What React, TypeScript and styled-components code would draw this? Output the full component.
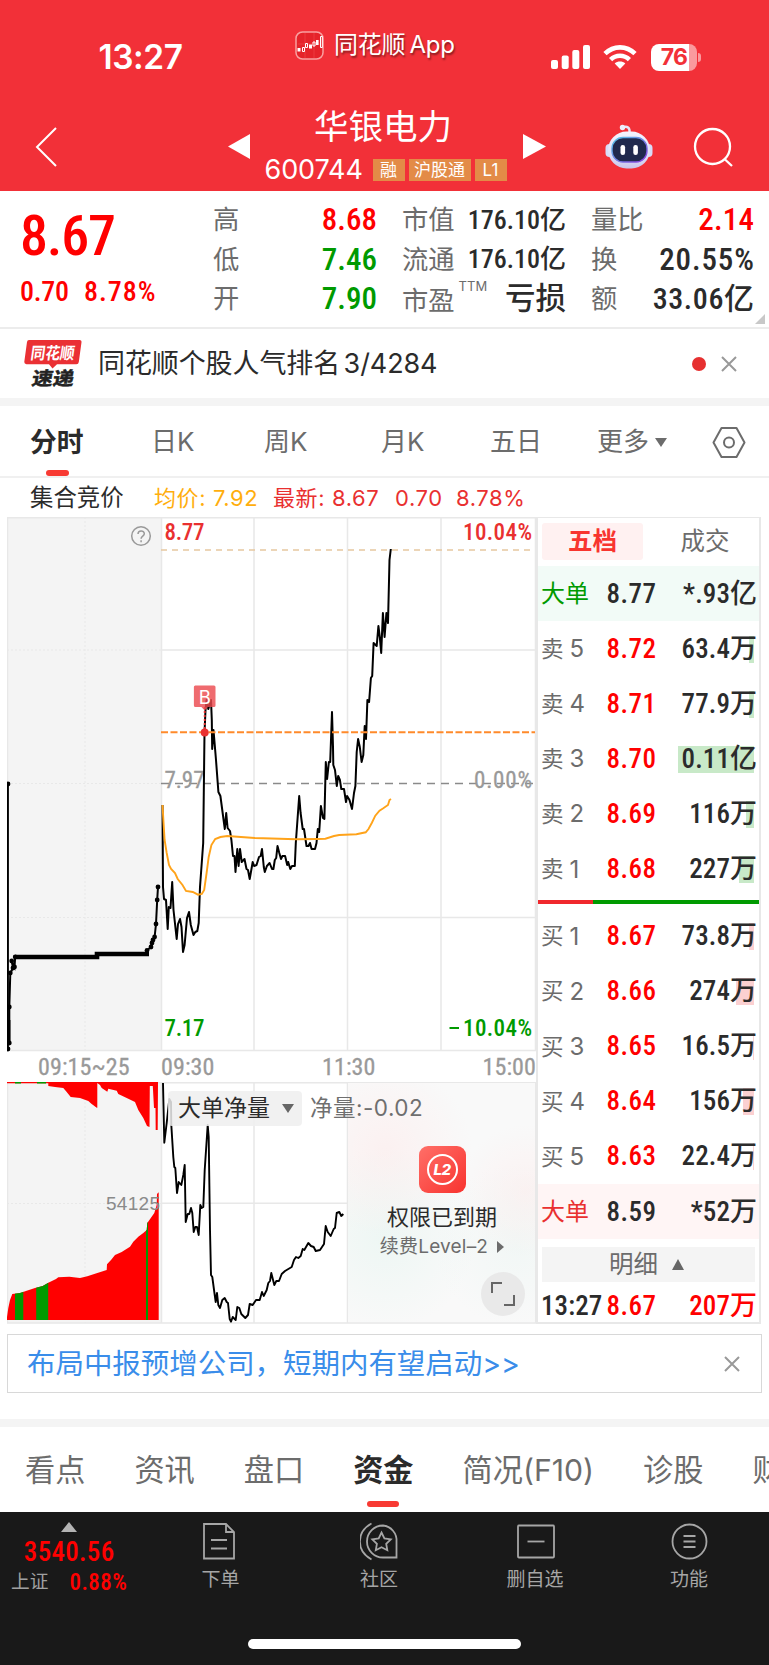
import React from 'react';
import styled, { createGlobalStyle, css } from 'styled-components';

const UI = `Inter, "Noto Sans CJK SC", sans-serif`;
const DIN = `Roboto, "Noto Sans CJK SC", sans-serif`;

const RED = '#ff0000';
const GREEN = '#009a00';
const INK = '#2b2b2b';
const MUTED = '#6c6c6c';
const LINE = '#e8e8e8';

const GlobalStyle = createGlobalStyle`
  * { box-sizing: border-box; }
  body { margin: 0; background: #fff; }
`;

const Screen = styled.div`
  width: 769px;
  height: 1665px;
  display: flex;
  flex-direction: column;
  overflow: hidden;
  background: #fff;
  color: ${INK};
  font-family: ${UI};
  font-size: 24px;
  line-height: 1;
  white-space: nowrap;
`;

/* condensed figures used for every price and amount */
const Num = styled.span<{ $size: number; $color?: string; $ls?: number; $light?: boolean }>`
  font-family: ${DIN};
  font-stretch: 75%;
  font-weight: ${p => (p.$light ? 400 : 500)};
  font-size: ${p => p.$size}px;
  line-height: 1;
  letter-spacing: ${p => p.$ls ?? 0}px;
  margin-right: ${p => -(p.$ls ?? 0)}px;
  color: ${p => p.$color ?? INK};
`;

/* ---------- header ---------- */

const Header = styled.header`
  height: 191px;
  flex: none;
  background: #f23038;
  color: #fff;
`;

const StatusBar = styled.div`
  height: 100px;
  display: grid;
  grid-template-columns: 295px 256px 1fr;
`;

const Clock = styled.div`
  padding: 41px 0 0 98.5px;
  font-size: 33.4px;
  font-weight: 600;
  letter-spacing: -0.4px;
`;

const AppMark = styled.div`
  height: 60px;
  padding-top: 30px;
  display: flex;
  align-items: center;
  gap: 10px;
  font-size: 24px;
  letter-spacing: -0.3px;
  word-spacing: -2px;
  text-shadow: 1px 2px 2px rgba(0, 0, 0, 0.45);
`;

const Indicators = styled.div`
  padding-top: 44px;
  display: flex;
  align-items: flex-start;
  gap: 13px;
`;

const BatteryGroup = styled.div`
  display: flex;
  margin-left: 1px;
`;

const Battery = styled.div`
  width: 46px;
  height: 27px;
  display: flex;
  align-items: center;
  justify-content: center;
  border-radius: 8px;
  background: linear-gradient(90deg, #fff 38px, #fa9a9e 38px);
  color: #f23038;
  font-size: 23px;
  font-weight: 700;
  letter-spacing: -0.8px;
`;

const BatteryTip = styled.i`
  width: 3px;
  height: 9px;
  margin: 9px 0 0 1px;
  border-radius: 0 3px 3px 0;
  background: #fa9a9e;
`;

const NavBar = styled.div`
  height: 91px;
  display: grid;
  grid-template-columns: 228px 22px 273px 23px 59px 88px 1fr;
`;

const NavSlot = styled.div<{ $top: number; $left?: number }>`
  padding: ${p => p.$top}px 0 0 ${p => p.$left ?? 0}px;
  line-height: 0;
`;

const StockTitle = styled.div`
  display: flex;
  flex-direction: column;
  align-items: flex-start;
`;

const StockName = styled.div`
  padding: 10px 0 0 64px;
  font-size: 34.5px;
  line-height: 34px;
`;

const StockMeta = styled.div`
  margin-top: 12px;
  padding-left: 14.5px;
  display: flex;
  align-items: center;
  gap: 4px;
`;

const Code = styled.span`
  width: 104px;
  font-size: 27px;
  letter-spacing: -0.1px;
  line-height: 28px;
`;

const Tag = styled.span`
  min-width: 32px;
  height: 22px;
  padding: 0 5.5px;
  display: flex;
  align-items: center;
  justify-content: center;
  background: #e38b47;
  font-size: 17px;
`;

/* ---------- quote summary ---------- */

const Quote = styled.section`
  height: 138px;
  flex: none;
  display: grid;
  grid-template-columns: 167px 164px 164px 163px;
  column-gap: 25px;
  padding-left: 21px;
  border-bottom: 2px solid #ececec;
  position: relative;
`;

const Last = styled.div`
  padding-top: 17px;
  margin-left: -1px;
`;

const Change = styled.div`
  display: flex;
  gap: 15px;
  margin-top: 14px;
`;

const Stats = styled.div`
  padding-top: 9px;
  display: flex;
  flex-direction: column;
`;

const Stat = styled.div`
  height: 39.5px;
  display: flex;
  align-items: center;
  justify-content: space-between;
`;

const StatLabel = styled.span<{ $drop?: boolean }>`
  display: flex;
  align-items: flex-start;
  gap: 4px;
  color: ${MUTED};
  font-size: 26.3px;
  line-height: 26px;
  padding-top: ${p => (p.$drop ? 5 : 1)}px;
`;

const Sup = styled.sup`
  font-size: 13px;
  line-height: 10px;
  margin-top: -7px;
  vertical-align: baseline;
`;

const Corner = styled.i`
  position: absolute;
  right: 4px;
  bottom: 3px;
  border-left: 10px solid transparent;
  border-bottom: 10px solid #c8c8c8;
`;

/* ---------- news strip ---------- */

const News = styled.section`
  height: 69px;
  flex: none;
  padding: 0 32px 0 24px;
  display: flex;
  align-items: center;
`;

const NewsText = styled.div`
  flex: 1;
  margin-left: 16px;
  font-size: 27px;
  letter-spacing: -0.1px;
  word-spacing: -4px;
`;

const Dot = styled.i`
  width: 14px;
  height: 14px;
  margin-right: 15px;
  border-radius: 50%;
  background: #e63030;
`;

const Band = styled.div`
  height: 8px;
  flex: none;
  background: #f4f4f4;
`;

/* ---------- chart tabs ---------- */

const ChartTabs = styled.nav`
  height: 72px;
  flex: none;
  display: grid;
  grid-template-columns: 121px 113px 117px 109px 107px 115px 1fr;
  padding-left: 30px;
  border-bottom: 2px solid #f0f0f0;
`;

const Tab = styled.div<{ $active?: boolean }>`
  display: flex;
  align-items: center;
  gap: 6px;
  padding-top: 2px;
  font-size: ${p => (p.$active ? 26.8 : 26)}px;
  color: ${p => (p.$active ? INK : MUTED)};
  font-weight: ${p => (p.$active ? 600 : 400)};
  position: relative;
  ${p =>
    p.$active &&
    css`
      &::after {
        content: '';
        position: absolute;
        left: 16px;
        bottom: 0;
        width: 23px;
        height: 6px;
        border-radius: 3px;
        background: #f83a33;
      }
    `}
`;

const InfoLine = styled.div`
  height: 39px;
  flex: none;
  padding: 1px 0 0 30px;
  display: flex;
  align-items: center;
  font-size: 22px;
  color: #e93030;
`;

const Auction = styled.span`
  width: 124px;
  color: ${INK};
  font-size: 23.4px;
`;

const Info = styled.span<{ $w: number; $color?: string }>`
  width: ${p => p.$w}px;
  letter-spacing: 0.6px;
  color: ${p => p.$color ?? '#e93030'};
`;

/* ---------- market area ---------- */

const Market = styled.main`
  height: 808px;
  flex: none;
  padding-left: 7px;
  display: flex;
`;

const Charts = styled.div`
  width: 529px;
  display: flex;
  flex-direction: column;
`;

const Plot = styled.svg`
  display: block;
  flex: none;
`;

const TimeAxis = styled.div`
  height: 30px;
  flex: none;
  display: grid;
  grid-template-columns: 123px 31px 161px 1fr auto;
  align-items: center;
`;

const AxisLabel = styled(Num)<{ $pad?: number }>`
  margin-right: 0;
  padding-left: ${p => p.$pad ?? 0}px;
  -webkit-text-stroke: 0.3px #999;
`;

const Lower = styled.div`
  position: relative;
  height: 243px;
`;

const IndicatorPick = styled.div`
  position: absolute;
  left: 161px;
  top: 9px;
  width: 134px;
  height: 35px;
  padding-left: 10px;
  display: flex;
  align-items: center;
  gap: 12px;
  border-radius: 4px;
  background: rgba(239, 239, 239, 0.85);
  font-size: 23px;
  color: ${INK};
`;

const IndicatorValue = styled.div`
  position: absolute;
  left: 303px;
  top: 9px;
  height: 35px;
  line-height: 33px;
  font-size: 22.5px;
  letter-spacing: 0.5px;
  color: #6f6f6f;
  z-index: 1;
`;

const Locked = styled.div`
  position: absolute;
  left: 341px;
  top: 1px;
  width: 187px;
  height: 239px;
  padding: 63px 0 0 1px;
  display: flex;
  flex-direction: column;
  align-items: center;
  background:
    radial-gradient(circle at 20% 28%, rgba(255, 228, 228, 0.4), transparent 38%),
    radial-gradient(circle at 95% 45%, rgba(255, 228, 228, 0.35), transparent 30%),
    radial-gradient(circle at 20% 65%, rgba(226, 244, 238, 0.5), transparent 42%),
    radial-gradient(circle at 90% 68%, rgba(230, 244, 240, 0.4), transparent 35%),
    #f9f9f9;
`;

const LevelBadge = styled.div`
  width: 47px;
  height: 47px;
  display: flex;
  align-items: center;
  justify-content: center;
  border-radius: 9px;
  background: linear-gradient(135deg, #ff6f68, #f8332f);
`;

const LevelRing = styled.div`
  width: 31px;
  height: 31px;
  display: flex;
  align-items: center;
  justify-content: center;
  border: 2px solid #fff;
  border-radius: 50%;
  color: #fff;
  font-size: 15px;
  font-weight: 800;
  font-style: italic;
  letter-spacing: -0.5px;
`;

const LockedTitle = styled.div`
  margin-top: 12px;
  font-size: 22px;
  line-height: 24px;
`;

const LockedLink = styled.div`
  margin-top: 9px;
  display: flex;
  align-items: center;
  gap: 9px;
  color: ${MUTED};
  font-size: 19px;
  letter-spacing: 0.2px;
  line-height: 18px;
`;

const Expand = styled.div`
  position: absolute;
  right: 10px;
  bottom: 6px;
  width: 44px;
  height: 44px;
  display: flex;
  align-items: center;
  justify-content: center;
  border-radius: 50%;
  background: #e9e9e9;
`;

/* ---------- order book ---------- */

const Book = styled.aside`
  width: 225px;
  height: 807px;
  display: flex;
  flex-direction: column;
  border: 2px solid ${LINE};
  border-width: 1px 2px 2px;
`;

const BookTabs = styled.div`
  height: 48px;
  flex: none;
  padding: 5px 4px 0;
  display: flex;
`;

const BookTab = styled.div<{ $active?: boolean }>`
  width: ${p => (p.$active ? 101 : 124)}px;
  height: 37px;
  flex: none;
  display: flex;
  align-items: center;
  justify-content: center;
  border-radius: 3px;
  font-size: 24.5px;
  ${p =>
    p.$active
      ? css`
          background: #fff1f1;
          color: #f8352f;
          font-weight: 600;
        `
      : css`
          color: ${MUTED};
        `}
`;

const Level = styled.div<{ $bg?: string; $h?: number }>`
  height: ${p => p.$h ?? 55.1}px;
  flex: none;
  padding: 1px 2px 0 3px;
  display: grid;
  grid-template-columns: 65.5px 62px 1fr;
  align-items: center;
  background: ${p => p.$bg ?? 'transparent'};
`;

const LevelName = styled.span<{ $color?: string }>`
  display: flex;
  align-items: center;
  gap: 6px;
  font-size: ${p => (p.$color ? 24 : 22.5)}px;
  color: ${p => p.$color ?? MUTED};
`;

const LevelNo = styled.span`
  font-size: 24px;
`;

const Amount = styled.span<{ $bar?: number; $tint?: string }>`
  height: 27px;
  display: flex;
  align-items: center;
  justify-content: flex-end;
  background: linear-gradient(${p => p.$tint ?? 'transparent'} 0 0) no-repeat right 3px top / ${p => p.$bar ?? 0}px 27px;
`;

const Ratio = styled.div`
  height: 4px;
  flex: none;
  margin: 3px 0 5px;
  background: linear-gradient(90deg, #f0282d 55px, ${GREEN} 55px);
`;

const Detail = styled.div`
  height: 35px;
  flex: none;
  margin: 8px 4px 0;
  padding-right: 4px;
  display: flex;
  align-items: center;
  justify-content: center;
  gap: 14px;
  background: #f4f4f4;
  color: ${MUTED};
  font-size: 24.5px;
`;

/* ---------- promotion ---------- */

const Promo = styled.section`
  height: 59px;
  flex: none;
  margin: 9px 7px 26px;
  padding: 1px 21px 0 19px;
  display: flex;
  align-items: center;
  justify-content: space-between;
  border: 1.5px solid #d8d8d8;
  color: #3a8dea;
  font-size: 28.5px;
  letter-spacing: -0.05px;
`;

/* ---------- lower tabs ---------- */

const SectionTabs = styled.nav`
  height: 85px;
  flex: none;
  display: flex;
  gap: 49px;
  padding-left: 25px;
  overflow: hidden;
`;

const SectionTab = styled.div<{ $active?: boolean }>`
  flex: none;
  display: flex;
  align-items: center;
  padding-top: 1px;
  font-size: 30.2px;
  color: ${p => (p.$active ? INK : MUTED)};
  font-weight: ${p => (p.$active ? 600 : 400)};
  position: relative;
  ${p =>
    p.$active &&
    css`
      &::after {
        content: '';
        position: absolute;
        left: 14px;
        bottom: 5px;
        width: 32px;
        height: 6px;
        border-radius: 3px;
        background: #f83a33;
      }
    `}
`;

/* ---------- dock ---------- */

const Dock = styled.footer`
  flex: 1;
  background: #191919;
  display: flex;
  flex-direction: column;
  align-items: center;
`;

const DockItems = styled.div`
  width: 100%;
  height: 127px;
  display: grid;
  grid-template-columns: 141px 159px 158px 154px 154px;
`;

const IndexBox = styled.div`
  padding-top: 10px;
  display: flex;
  flex-direction: column;
  align-items: center;
`;

const Up = styled.i<{ $w: number; $h: number; $color: string }>`
  border: ${p => p.$w / 2}px solid transparent;
  border-top: 0;
  border-bottom: ${p => p.$h}px solid ${p => p.$color};
`;

const DockUp = styled(Up)`
  margin-right: 4px;
`;

const Down = styled.i<{ $color: string }>`
  border: 6.5px solid transparent;
  border-bottom: 0;
  border-top: 9px solid ${p => p.$color};
`;

const IndexValue = styled.div`
  margin: 7px 3px 0 0;
`;

const IndexRow = styled.div`
  width: 100%;
  margin-top: 5px;
  padding-left: 11px;
  display: flex;
  align-items: center;
  gap: 21px;
  color: #a0a0a0;
  font-size: 18.7px;
`;

const DockItem = styled.div`
  padding-top: 10px;
  display: flex;
  flex-direction: column;
  align-items: center;
  gap: 9px;
  color: #a6a6a6;
  font-size: 19px;
`;

const HomeBar = styled.div`
  width: 273px;
  height: 10px;
  border-radius: 5px;
  background: #fff;
`;

/* ---------- data ---------- */

const price = '162.5,805 163,887 164,899 166,900 167.7,929 168.8,907 170.5,908 172.2,882 173.5,910 176.7,939 178,924 180,919 181.5,927 183,952 184.6,945 187,918 189,912 190.8,925 193.5,935 195.3,932 197.3,931 198.7,923 200,887 203.2,843 204.5,733 205.5,710 206.5,700 208.3,709 211,700 211.8,720 212.2,749 213.5,730 216,760 218.4,792 220.4,796 224.8,829 226.2,813 227.6,828 230,831 231.4,840 233,856 234.5,856 235.5,872 237.3,849 238.6,866 240,849 241.7,862 244.5,859 246.5,869 248,870 249.7,879 252.7,862 254.1,866 256.5,865 259,857 260.7,856 262,849 263.8,867 264.8,872 266.9,866 269.6,863 272,869 273.4,869 274.8,860 276.2,858 277.5,846 279.3,853 281,859 282.4,856 285.1,856 287.2,865 288.2,862 290.3,869 292,866 294.8,866 295.8,843 299.2,796 300.6,813 302.7,829 304,829 306.5,846 308.5,846 310,843 311.6,849 315,849 316.5,843 317.8,829 319.2,832 320.9,806 323,818 324.4,819 325.8,762 327.1,779 328.9,762 330.2,762 332,712 333,747 333.3,765 335,770 336.8,786 338.2,776 339.9,780 341.3,789 344,789 346,802 347.1,796 349.5,800 352,809 354,793 355.4,786 356.7,752 358.1,739 359.8,747 361.6,762 363.3,755 364.7,726 366,739 367.4,700 369.1,702 370.9,678 372.2,676 373.6,643 376.7,646 378.4,626 379.8,637 381.2,653 382.9,613 384.6,637 386.4,613 388,623 389.5,560 390.8,549';
const average = '162.5,805 163.5,822 164.6,840 166.7,853 169,865 171.1,869 175,873 177.7,879 182.5,885 186,891 192.8,892 198,894.7 201.8,894 204.2,890 206.6,873 208.7,857 211.4,845 215.2,839 220.4,837 227.3,836 241,837 254.8,838 296.1,839.3 316.8,839 325.4,838.7 334,836 339.2,835 356.4,834.3 365.7,832.3 368.5,829 371.9,822.7 375.3,815.7 379.5,810.7 383.3,808.3 388,805 389.5,800 391,799';
const auctionTail = [[9.3, 1043], [9.3, 1007], [10.3, 973], [13, 968], [11.7, 961], [14.5, 967], [15.2, 957]];
const auctionHead = [[147, 950.5], [151, 947], [152, 943], [153, 940], [154.6, 937], [156, 924], [157.2, 900], [158, 887]];
const net = '163,1083 164.3,1142.7 166.7,1123 169.3,1099 171,1102 171.3,1125 173.3,1157 174.3,1167 175.3,1168 177,1193 178.7,1182 181.3,1185 183.3,1175 184.7,1165 185.7,1222 187.7,1214 189.3,1214 191,1208 192.3,1213 193.7,1232 195.3,1227 197,1227 198.7,1235 200.3,1205 201.7,1208 203.3,1207 204.7,1170 207.7,1125 208.7,1137 210,1230 211,1275 212.3,1277 214.3,1292 215.7,1302 217,1293 218.3,1305 220,1308 222.3,1300 224.7,1298 226.7,1302 228,1303 229.7,1319 231,1321.7 232.7,1317 235.7,1320 237.3,1307 239.3,1308 241.3,1314 243.3,1316 245.3,1318 248,1315 249.7,1304 252.7,1305 256,1300 259.7,1300 262,1292 263.7,1296 266.7,1290 268.3,1283 270,1281 271.3,1273 274.3,1285 276.3,1281 279,1281 281.7,1274 285,1271 291.7,1267 294,1260 296,1257 298.3,1258 300.7,1256 302.7,1249 304.3,1250 308.3,1243 311,1246 313.7,1247 315.7,1251 320,1250 324,1244 325.7,1226 327.7,1232 330.7,1236 333.7,1229 335,1228 336.7,1213 339.3,1212 341.3,1216 343.3,1214';
const matched = '7,1320 7,1317 8.3,1308 10,1300 12.3,1294 20,1293 26.7,1290.7 35,1288 42.7,1286 48.3,1282.7 56,1279 58.3,1277.3 69.3,1276.7 80,1278 87.3,1276.3 95,1273.7 106.7,1270 107,1264.3 111,1260 115,1255 121.7,1252 130,1246.7 133.3,1241.7 138.3,1236.7 143.3,1233 146.7,1230 147.3,1223 154.3,1213 156.7,1205 157,1194 158.7,1192.3 158.7,1320';
const unmatched = '7,1082 7,1083.3 48.3,1083.3 48.3,1086 55,1087 63.3,1088 66.7,1092 70.7,1097 80,1098 88.3,1101 91.7,1104 96.7,1107.7 97.3,1107.7 97.3,1083 100,1085 101.7,1088 107.3,1091.7 108.3,1088.7 116.7,1090.7 118.3,1094 126.7,1098 135,1102 138.3,1110 143.3,1118 147,1126 149.5,1127 149.8,1086 152.8,1086 154,1108 155.5,1108 155.7,1130 157.7,1130 158,1082';

const asks = [
  ['卖', '5', '8.72', '63.4万', 5], ['卖', '4', '8.71', '77.9万', 5], ['卖', '3', '8.70', '0.11亿', 76],
  ['卖', '2', '8.69', '116万', 8], ['卖', '1', '8.68', '227万', 15],
] as const;
const bids = [
  ['买', '1', '8.67', '73.8万', 5], ['买', '2', '8.66', '274万', 18], ['买', '3', '8.65', '16.5万', 1],
  ['买', '4', '8.64', '156万', 11], ['买', '5', '8.63', '22.4万', 1],
] as const;

/* ---------- drawings ---------- */

const Close = () => (
  <svg width="16" height="16" viewBox="0 0 16 16" stroke="#999" strokeWidth="2" fill="none">
    <path d="M1 1 15 15M15 1 1 15" />
  </svg>
);

const AppLogo = () => (
  <svg width="29" height="29" viewBox="0 0 29 29">
    <rect x="1" y="1" width="27" height="27" rx="6.5" fill="#e5232a" stroke="#f9a0a0" strokeWidth="1.5" />
    <path d="M3 13h23M10 2v25M19 2v25" stroke="#f04a4e" strokeWidth=".6" />
    <g fill="#fff"><path d="M2.500 17h3v3.500h-3zM14 13.500h3v4h-3zM21 9h2.600v5H21z" /></g>
    <g fill="none" stroke="#fff" strokeWidth="1"><path d="M7.500 16.500h2v4h-2zM10.500 12.500h2v4h-2zM18 11h2v4h-2zM25.500 5.500h1.800v11h-1.800z" /></g>
  </svg>
);

const Signal = () => (
  <svg width="39" height="25" viewBox="0 0 39 25" fill="#fff">
    <rect x="0" y="16" width="7" height="9" rx="2" /><rect x="10.700" y="11.500" width="7" height="13.500" rx="2" />
    <rect x="21.300" y="6" width="7" height="19" rx="2" /><rect x="32" y="1" width="7" height="24" rx="2" />
  </svg>
);

const Wifi = () => (
  <svg width="34" height="25" viewBox="0 0 34 25">
    <g fill="none" stroke="#fff" strokeWidth="4.600">
      <path d="M2 9.700C10.500 1.200 23.500 1.200 32 9.700" /><path d="M7.600 15.700c5.300-5.200 13.500-5.200 18.800 0" />
    </g>
    <path d="M17 25l-5.300-5.600c3-2.600 7.600-2.600 10.600 0z" fill="#fff" />
  </svg>
);

const Robot = () => (
  <svg width="48" height="45" viewBox="0 0 48 45">
    <defs>
      <linearGradient id="shell" x1="0" y1="0" x2="0" y2="1"><stop offset="0" stopColor="#f4f4ff" /><stop offset=".7" stopColor="#dcdcf5" /><stop offset="1" stopColor="#c9c4ea" /></linearGradient>
      <linearGradient id="rim" x1="0" y1="0" x2="1" y2="1"><stop offset="0" stopColor="#56c8e8" /><stop offset="1" stopColor="#8a3ce0" /></linearGradient>
    </defs>
    <path d="M17.500 3.500c5-2 7.500.5 7 5" fill="none" stroke="#e6e6fa" strokeWidth="2.400" />
    <circle cx="17.500" cy="3.500" r="2.700" fill="#eeeefc" />
    <rect x=".5" y="20" width="8" height="13" rx="4" fill="#d8dcf8" /><rect x="39.500" y="20" width="8" height="13" rx="4" fill="#d8dcf8" />
    <rect x="3" y="7.500" width="42" height="37" rx="18.500" fill="url(#shell)" />
    <rect x="7" y="13.500" width="35" height="24.500" rx="11" fill="#20294d" stroke="url(#rim)" strokeWidth="1.400" />
    <rect x="15.500" y="21" width="4.600" height="10" rx="2.200" fill="#fff" /><rect x="28.300" y="21" width="4.600" height="10" rx="2.200" fill="#fff" />
  </svg>
);

const ExpressLogo = () => (
  <svg width="58" height="48" viewBox="0 0 58 48">
    <path d="M5 0h50.500a2 2 0 0 1 2 2.300L54.800 22a2.500 2.500 0 0 1-2.500 2.200H33l-4.500 4.300-3.500-4.300H2.500A2.300 2.300 0 0 1 .3 21.700L3 2A2.300 2.300 0 0 1 5 0z" fill="#ea3034" />
    <g fontFamily='"Noto Sans CJK SC"' fontWeight="700" fontSize="16.500">
      <text x="0" y="0" transform="translate(6 18.500) skewX(-8)" fill="#fff" textLength="44" lengthAdjust="spacingAndGlyphs">同花顺</text>
      <text x="0" y="0" transform="translate(7 45) skewX(-10)" fill="#222" stroke="#222" strokeWidth=".5" fontSize="18.500" textLength="42" lengthAdjust="spacingAndGlyphs">速递</text>
    </g>
  </svg>
);

const gridText = { fontFamily: 'Roboto', fontStretch: '75%', fontWeight: 500, fontSize: 23 } as React.CSSProperties;

const PricePlot = () => (
  <Plot width="530" height="535" viewBox="7 517 530 535" fill="none">
    <rect x="7" y="517" width="154" height="533" fill="#f4f4f4" />
    <g stroke={LINE} strokeWidth="1.500">
      <path d="M7 517.700H536M161 650H536M161 917.500H536M7 1050.500H536M7.500 517V1050M161.500 517V1050M254 517V1050M347.500 517V1050M441 517V1050M535.500 517V1050" />
      <path d="M85 517V1050M7 650H161M7 783.500H161M7 917.500H161" strokeDasharray="2 2" strokeWidth="1" />
    </g>
    <path d="M161 550H532" stroke="#e6c8a0" strokeWidth="1.700" strokeDasharray="6 5" />
    <path d="M161 783.500H535" stroke="#8a8a8a" strokeWidth="1.300" strokeDasharray="8 6" />
    <g style={gridText}>
      <text x="164.500" y="539.500" fill="#e93030" textLength="40">8.77</text>
      <text x="532" y="539.500" fill="#e93030" textAnchor="end" textLength="69">10.04%</text>
      <g fill="#999" stroke="#999" strokeWidth=".3" style={{ fontWeight: 400 }}>
        <text x="164.500" y="788" textLength="40">7.97</text>
        <text x="532" y="788" textAnchor="end" textLength="58">0.00%</text>
      </g>
      <text x="164.500" y="1036" fill={GREEN} textLength="40">7.17</text>
      <text x="532" y="1036" fill={GREEN} textAnchor="end" textLength="69">10.04%</text>
      <path d="M449.500 1028H459" stroke={GREEN} strokeWidth="2" />
    </g>
    <g stroke="#999" strokeWidth="1.500">
      <circle cx="141" cy="536" r="9.300" />
      <path d="M138 534c0-4 6.300-4 6.300-.3 0 2.500-3.200 2.300-3.200 5M141.100 540.300v1.900" />
    </g>
    <g stroke="#000" fill="#000">
      <path d="M7.800 783.500V1050M9.300 1020V1043" strokeWidth="2.200" />
      <polyline points={auctionTail.map(p => p.join()).join(' ')} fill="none" strokeWidth="2" />
      <path d="M15 957H97V954H149" strokeWidth="4.600" fill="none" />
      <polyline points={auctionHead.map(p => p.join()).join(' ')} fill="none" strokeWidth="2" />
      {[[8, 784], [8, 1049], ...auctionTail, ...auctionHead].map(([x, y], i) => (
        <circle key={i} cx={x} cy={y} r="2.400" stroke="none" />
      ))}
    </g>
    <polyline points={price} stroke="#000" strokeWidth="2" strokeLinejoin="round" />
    <polyline points={average} stroke="#ffa31a" strokeWidth="1.900" />
    <path d="M161 732.300H535" stroke="#ff8a2b" strokeWidth="2" strokeDasharray="7 2.500" />
    <path d="M204.700 707V732" stroke="#e93030" strokeWidth="1.800" strokeDasharray="2 2" />
    <circle cx="204.700" cy="732.500" r="4" fill="#e93030" />
    <path d="M195.500 685.500h18.500a1.500 1.500 0 0 1 1.500 1.500v18.500a1.500 1.500 0 0 1-1.500 1.500h-6l-3.300 3.500-3.300-3.500h-6a1.500 1.500 0 0 1-1.500-1.500V687a1.500 1.500 0 0 1 1.600-1.500z" fill="#ec4a4f" fillOpacity=".82" />
    <text x="204.700" y="703.500" fill="#fff" fontFamily="Inter" fontSize="18.500" textAnchor="middle">B</text>
  </Plot>
);

const NetPlot = () => (
  <Plot width="530" height="243" viewBox="7 1082 530 243" fill="none">
    <clipPath id="matched"><polygon points={matched} /></clipPath>
    <rect x="7" y="1082" width="154" height="241" fill="#f4f4f4" />
    <g stroke={LINE} strokeWidth="1.500">
      <path d="M7 1082.700H536M161 1203.300H348M7 1323H536M7.500 1082V1323M161.500 1082V1323M254 1082V1323M347.500 1082V1323M535.500 1082V1323" />
      <path d="M85 1082V1323M7 1203.500H161" strokeDasharray="2 2" strokeWidth="1" />
    </g>
    <polygon points={matched} fill={RED} />
    <path clipPath="url(#matched)" d="M15 1180h8.300v140H15zM36.200 1180h12v140h-12zM146 1180h2v140h-2z" fill={GREEN} />
    <polygon points={unmatched} fill={RED} />
    <path d="M15 1082h6v1.500h-6zM37 1082h9v1.500h-9z" fill={GREEN} />
    <text x="106" y="1210" fill="#8a8a8a" fontFamily='"Liberation Sans"' fontSize="19" textLength="54">54125</text>
    <polyline points={net} stroke="#000" strokeWidth="1.900" strokeLinejoin="round" />
  </Plot>
);

const dockStroke = { fill: 'none', stroke: '#a6a6a6', strokeWidth: 1.8 };

const dockItems = [
  { label: '下单', icon: <path d="M3 2h22l8 8v26.500H3zM25 2v8h8M10 18h16M10 26.500h16" /> },
  {
    label: '社区',
    icon: (
      <>
        <path d="M23 3.500A15.500 15.500 0 0 0 23 35.500H36.500V19.500A15 15 0 0 0 23 3.500z" />
        <path d="M11.500 1.500C-4 10-4 29 11.500 37.500" />
        <path d="m21.500 10.500 2.900 5.900 6.400.9-4.600 4.500 1.100 6.400-5.800-3-5.700 3 1.100-6.400-4.600-4.500 6.400-.9z" />
      </>
    ),
  },
  { label: '删自选', icon: <><rect x="2" y="3.500" width="36" height="32" rx="1" /><path d="M11.500 19.500h17" /></> },
  { label: '功能', icon: <><circle cx="19.500" cy="19.500" r="17" /><path d="M13.500 14h12M13.500 19.500h12M13.500 25h12" /></> },
];

const Row = ({ row, tint }: { row: readonly [string, string, string, string, number]; tint: string }) => (
  <Level>
    <LevelName><span>{row[0]}</span><LevelNo>{row[1]}</LevelNo></LevelName>
    <Num $size={27} $ls={0.5} $color={RED}>{row[2]}</Num>
    <Amount $bar={row[4]} $tint={tint}><Num $size={27} $ls={0.1}>{row[3]}</Num></Amount>
  </Level>
);

export default function App() {
  return (
    <Screen>
      <GlobalStyle />
      <Header>
        <StatusBar>
          <Clock>13:27</Clock>
          <AppMark><AppLogo />同花顺 App</AppMark>
          <Indicators>
            <Signal />
            <Wifi />
            <BatteryGroup><Battery>76</Battery><BatteryTip /></BatteryGroup>
          </Indicators>
        </StatusBar>
        <NavBar>
          <NavSlot $top={27} $left={35}>
            <svg width="22" height="40" viewBox="0 0 22 40" fill="none" stroke="#fff" strokeWidth="2"><path d="M21 1 2 20 21 39" /></svg>
          </NavSlot>
          <NavSlot $top={34}><svg width="22" height="25" fill="#fff"><path d="M22 0v25L0 12.500z" /></svg></NavSlot>
          <StockTitle>
            <StockName>华银电力</StockName>
            <StockMeta><Code>600744</Code><Tag>融</Tag><Tag>沪股通</Tag><Tag>L1</Tag></StockMeta>
          </StockTitle>
          <NavSlot $top={34}><svg width="23" height="25" fill="#fff"><path d="M0 0v25l23-12.500z" /></svg></NavSlot>
          <span />
          <NavSlot $top={24}><Robot /></NavSlot>
          <NavSlot $top={27}>
            <svg width="40" height="40" viewBox="0 0 40 40" fill="none" stroke="#fff" strokeWidth="2.300"><circle cx="19.500" cy="19.500" r="17.500" /><path d="m31.500 32 7.500 7" /></svg>
          </NavSlot>
        </NavBar>
      </Header>

      <Quote>
        <Last>
          <Num $size={56} $ls={-1.2} $color={RED}>8.67</Num>
          <Change><Num $size={28} $ls={-0.3} $color={RED}>0.70</Num><Num $size={28} $ls={1} $color={RED}>8.78%</Num></Change>
        </Last>
        <Stats>
          <Stat><StatLabel>高</StatLabel><Num $size={31} $color={RED}>8.68</Num></Stat>
          <Stat><StatLabel>低</StatLabel><Num $size={31} $color={GREEN}>7.46</Num></Stat>
          <Stat><StatLabel>开</StatLabel><Num $size={31} $color={GREEN}>7.90</Num></Stat>
        </Stats>
        <Stats>
          <Stat><StatLabel>市值</StatLabel><Num $size={26}>176.10亿</Num></Stat>
          <Stat><StatLabel>流通</StatLabel><Num $size={26}>176.10亿</Num></Stat>
          <Stat><StatLabel $drop>市盈<Sup>TTM</Sup></StatLabel><Num $size={30.5}>亏损</Num></Stat>
        </Stats>
        <Stats>
          <Stat><StatLabel>量比</StatLabel><Num $size={31} $ls={0.2} $color={RED}>2.14</Num></Stat>
          <Stat><StatLabel>换</StatLabel><Num $size={31} $ls={0.9}>20.55%</Num></Stat>
          <Stat><StatLabel>额</StatLabel><Num $size={30} $ls={0.6}>33.06亿</Num></Stat>
        </Stats>
        <Corner />
      </Quote>

      <News>
        <ExpressLogo />
        <NewsText>同花顺个股人气排名 3/4284</NewsText>
        <Dot />
        <Close />
      </News>
      <Band />

      <ChartTabs>
        <Tab $active>分时</Tab>
        <Tab>日K</Tab>
        <Tab>周K</Tab>
        <Tab>月K</Tab>
        <Tab>五日</Tab>
        <Tab>更多<Down $color={MUTED} /></Tab>
        <Tab>
          <svg width="34" height="33" viewBox="0 0 34 33" fill="none" stroke={MUTED} strokeWidth="2"><path d="M9.500 2h15L32.500 16.500 24.500 31h-15L1.500 16.500z" strokeLinejoin="round" /><circle cx="17" cy="16.500" r="5" /></svg>
        </Tab>
      </ChartTabs>

      <InfoLine>
        <Auction>集合竞价</Auction>
        <Info $w={119} $color="#ffae0d">均价: 7.92</Info>
        <Info $w={122}>最新: 8.67</Info>
        <Info $w={61}>0.70</Info>
        <Info $w={80}>8.78%</Info>
      </InfoLine>

      <Market>
        <Charts>
          <PricePlot />
          <TimeAxis>
            <AxisLabel $size={24} $color="#999" $pad={31} $ls={0.1} $light>09:15~25</AxisLabel>
            <span />
            <AxisLabel $size={24} $color="#999" $ls={0.1} $light>09:30</AxisLabel>
            <AxisLabel $size={24} $color="#999" $ls={0.1} $light>11:30</AxisLabel>
            <AxisLabel $size={24} $color="#999" $ls={0.1} $light>15:00</AxisLabel>
          </TimeAxis>
          <Lower>
            <NetPlot />
            <IndicatorPick>大单净量<Down $color="#666" /></IndicatorPick>
            <IndicatorValue>净量:-0.02</IndicatorValue>
            <Locked>
              <LevelBadge><LevelRing>L2</LevelRing></LevelBadge>
              <LockedTitle>权限已到期</LockedTitle>
              <LockedLink>续费Level–2<svg width="7" height="12" fill={MUTED}><path d="M0 0 7 6 0 12z" /></svg></LockedLink>
              <Expand>
                <svg width="26" height="26" viewBox="0 0 26 26" fill="none" stroke="#666" strokeWidth="2"><path d="M2 12V2h10M24 14v10H14" /></svg>
              </Expand>
            </Locked>
          </Lower>
        </Charts>

        <Book>
          <BookTabs><BookTab $active>五档</BookTab><BookTab>成交</BookTab></BookTabs>
          <Level $bg="#f2fbf7">
            <LevelName $color={GREEN}>大单</LevelName>
            <Num $size={27} $ls={0.5}>8.77</Num>
            <Amount><Num $size={27} $ls={0.1}>*.93亿</Num></Amount>
          </Level>
          {asks.map(r => <Row key={r[2]} row={r} tint="#c8e9c8" />)}
          <Ratio />
          {bids.map(r => <Row key={r[2]} row={r} tint="#fbd0d1" />)}
          <Level $bg="#fff5f5">
            <LevelName $color="#e93030">大单</LevelName>
            <Num $size={27} $ls={0.5}>8.59</Num>
            <Amount><Num $size={27} $ls={0.1}>*52万</Num></Amount>
          </Level>
          <Detail>明细<Up $w={13} $h={11} $color="#666" /></Detail>
          <Level $h={47}>
            <Num $size={27} $ls={0.1}>13:27</Num>
            <Num $size={27} $ls={0.5} $color={RED}>8.67</Num>
            <Amount><Num $size={27} $ls={0.1} $color={RED}>207万</Num></Amount>
          </Level>
        </Book>
      </Market>

      <Promo><span>布局中报预增公司，短期内有望启动&gt;&gt;</span><Close /></Promo>
      <Band />

      <SectionTabs>
        <SectionTab>看点</SectionTab>
        <SectionTab>资讯</SectionTab>
        <SectionTab>盘口</SectionTab>
        <SectionTab $active>资金</SectionTab>
        <SectionTab>简况(F10)</SectionTab>
        <SectionTab>诊股</SectionTab>
        <SectionTab>财务</SectionTab>
      </SectionTabs>

      <Dock>
        <DockItems>
          <IndexBox>
            <DockUp $w={17} $h={10} $color="#b4b4b4" />
            <IndexValue><Num $size={27} $ls={0.3} $color={RED}>3540.56</Num></IndexValue>
            <IndexRow><span>上证</span><Num $size={23} $ls={0.5} $color={RED}>0.88%</Num></IndexRow>
          </IndexBox>
          {dockItems.map(d => (
            <DockItem key={d.label}>
              <svg width="39" height="39" viewBox="0 0 39 39" {...dockStroke}>{d.icon}</svg>
              {d.label}
            </DockItem>
          ))}
        </DockItems>
        <HomeBar />
      </Dock>
    </Screen>
  );
}
